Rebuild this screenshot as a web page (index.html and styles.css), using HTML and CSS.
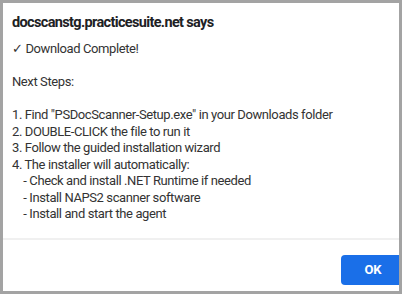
FILE: index.html
```html
<!DOCTYPE html>
<html lang="en">
<head>
    <meta charset="UTF-8">
    <meta name="viewport" content="width=device-width, initial-scale=1.0">
    <title>docscanstg.practicesuite.net says</title>
    <link rel="stylesheet" href="styles.css">
</head>
<body>
    <div class="dialog">
        <div class="dialog-title">docscanstg.practicesuite.net says</div>
        <div class="dialog-message">✓ Download Complete!

Next Steps:

1. Find "PSDocScanner-Setup.exe" in your Downloads folder
2. DOUBLE-CLICK the file to run it
3. Follow the guided installation wizard
4. The installer will automatically:
    - Check and install .NET Runtime if needed
    - Install NAPS2 scanner software
    - Install and start the agent</div>
        <div class="dialog-footer">
            <button class="ok-btn">OK</button>
        </div>
    </div>
</body>
</html>
```

FILE: styles.css
```css
* {
    margin: 0;
    padding: 0;
    box-sizing: border-box;
    font-family: 'Segoe UI', Roboto, 'Open Sans', sans-serif;
}
body {
    background: white;
    width: 402px;
    height: 295px;
}
.dialog {
    width: 402px;
    height: 294px;
    border: 3px solid #a3a3a3;
    background: white;
    overflow: hidden;
    display: flex;
    flex-direction: column;
}
.dialog-title {
    padding: 10px 9px 0;
    font-size: 14.5px;
    font-weight: bold;
    letter-spacing: -0.65px;
    line-height: 20px;
    color: #202124;
}
.dialog-message {
    padding: 8px 9px 0;
    font-size: 13px;
    letter-spacing: -0.4px;
    line-height: 16.5px;
    color: #333;
    white-space: pre-wrap;
}
.dialog-footer {
    margin-top: 15px;
    border-top: 2px solid #f0f0f0;
    display: flex;
    justify-content: flex-end;
    padding-top: 15px;
}
.ok-btn {
    width: 64px;
    height: 30px;
    margin-right: -6px;
    border: none;
    border-radius: 4px;
    background: #1a6fe8;
    color: white;
    font-size: 13px;
    font-weight: bold;
    cursor: pointer;
}
```
